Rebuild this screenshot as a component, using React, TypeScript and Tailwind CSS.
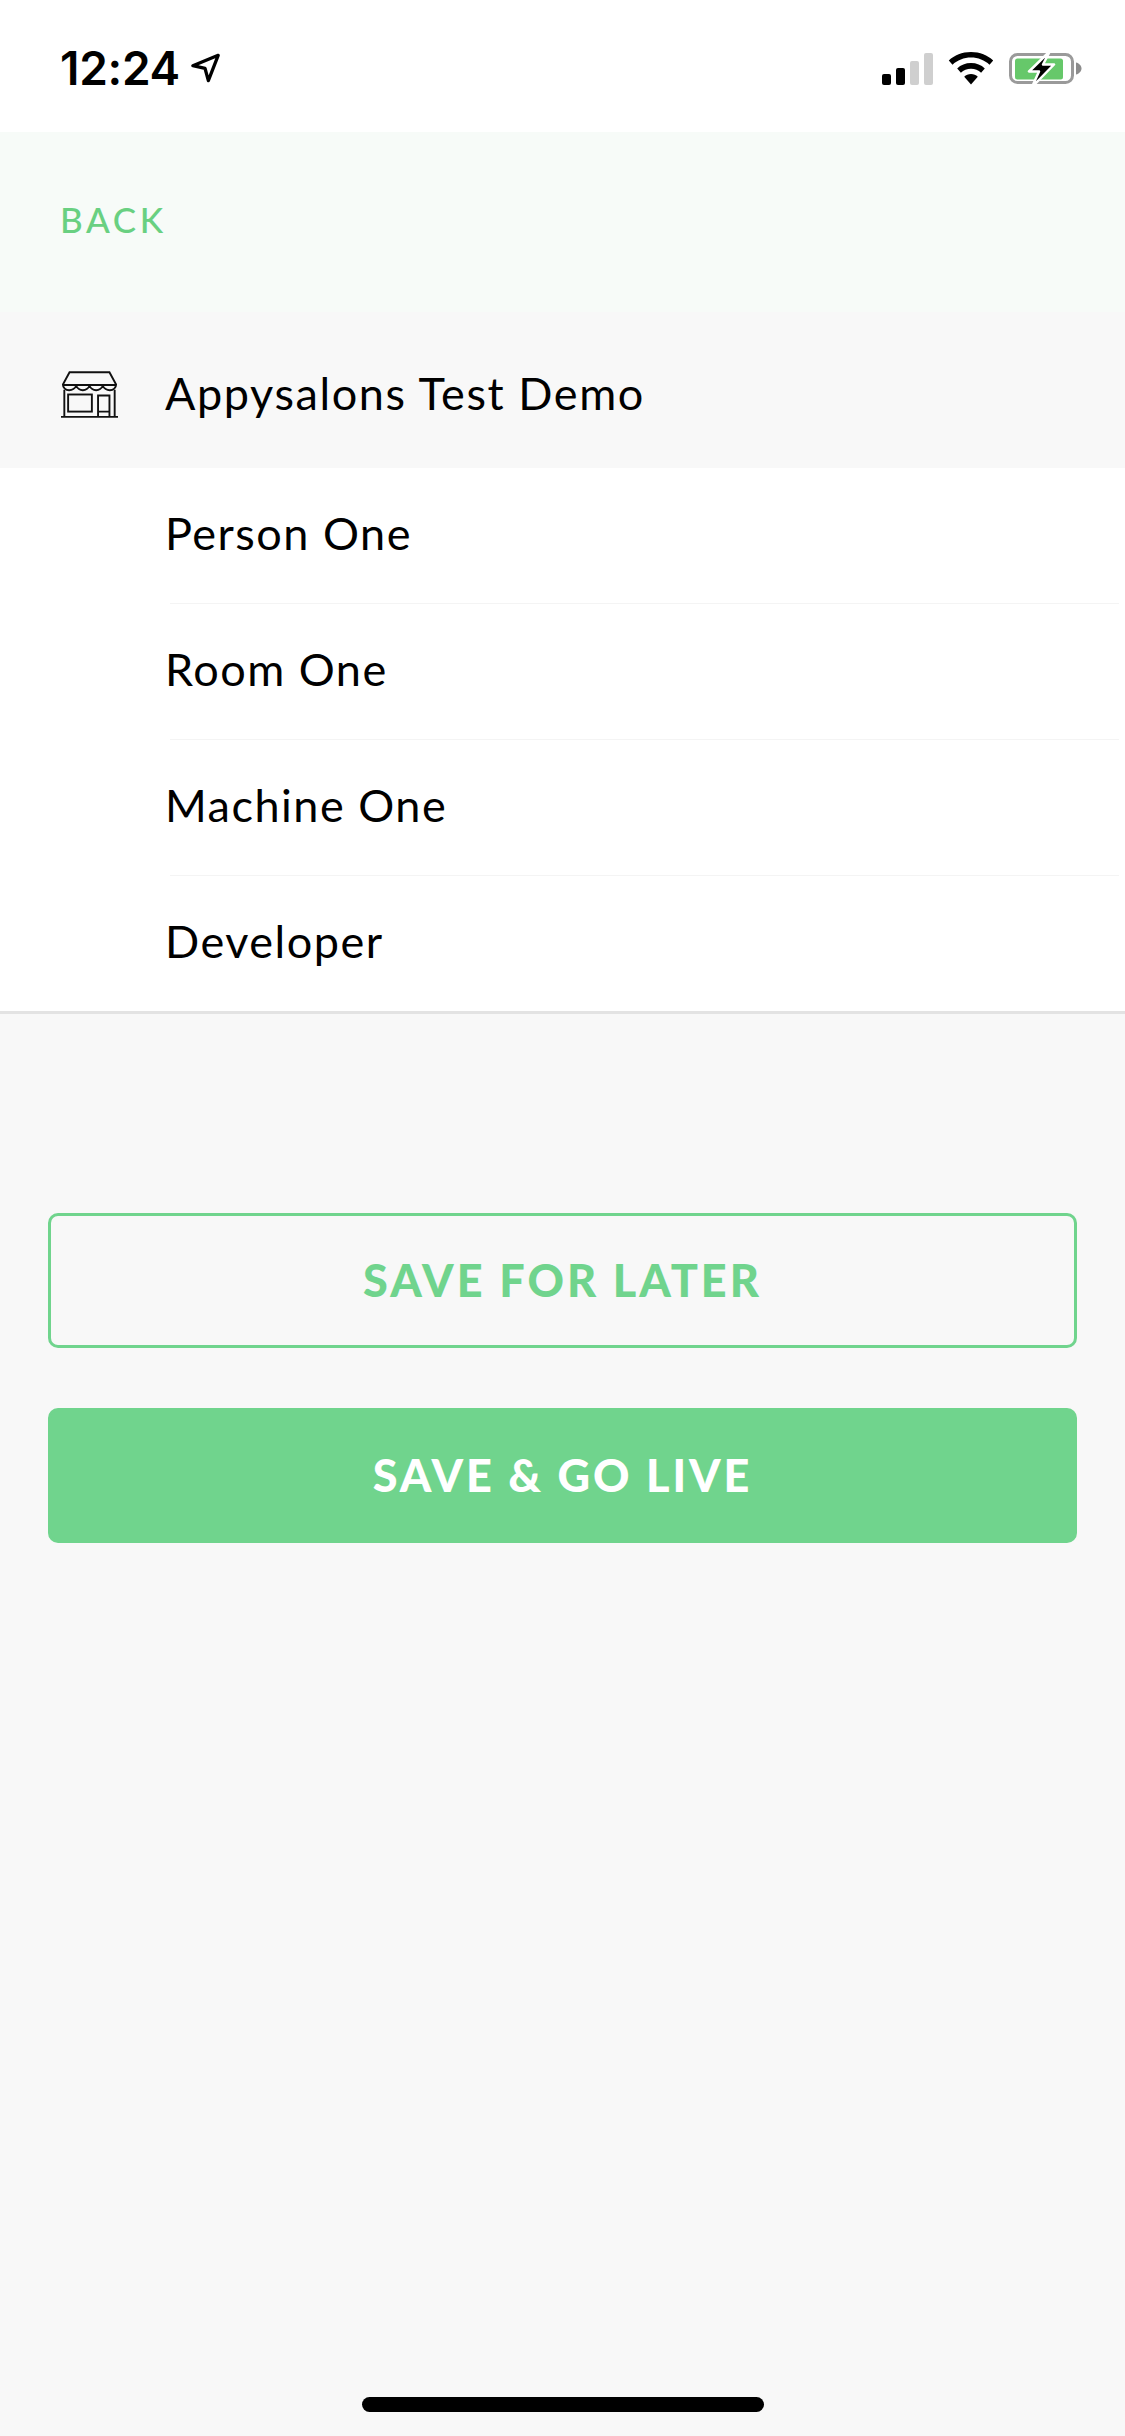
import { Fragment } from "react";

const staff = ["Person One", "Room One", "Machine One", "Developer"];

function StatusBar() {
  return (
    <div className="h-[132px] bg-white flex items-center justify-between pl-[60px] pr-[43px]">
      <div className="flex items-center gap-[11px] pt-[4px]">
        <span className="font-['Inter',sans-serif] font-semibold text-[46px] leading-none text-black tracking-[-0.3px]">
          12:24
        </span>
        <svg width="30" height="30" viewBox="0 0 32 32" fill="none" stroke="#000" strokeWidth="3.5" strokeLinejoin="round">
          <path d="M2 13.5 29 2.5 18.5 29.5 15 16.5Z" />
        </svg>
      </div>
      <div className="flex items-center gap-[15px] pt-[5px]">
        {/* signal */}
        <div className="flex items-end gap-[5px] h-[33px]">
          <div className="w-[9px] h-[11px] rounded-[2px] bg-black" />
          <div className="w-[9px] h-[17px] rounded-[2px] bg-black" />
          <div className="w-[9px] h-[24px] rounded-[2px] bg-[#cfcfcf]" />
          <div className="w-[9px] h-[32px] rounded-[2px] bg-[#cfcfcf]" />
        </div>
        {/* wifi */}
        <svg width="46" height="33" viewBox="0 0 46 33" fill="#000">
          <path d="M23 0C14 0 6.500 3.200 .8 8.500L4.500 12.800C9.400 8.300 15.900 5.600 23 5.600S36.600 8.300 41.500 12.800L45.200 8.500C39.500 3.200 32 0 23 0Z" />
          <path d="M23 11C17.500 11 12.800 13 9.200 16.400L12.900 20.700C15.600 18.200 19.100 16.700 23 16.700S30.400 18.200 33.100 20.700L36.800 16.400C33.200 13 28.500 11 23 11Z" />
          <path d="M23 22C20.300 22 18 23 16.200 24.700L23 32.500 29.800 24.700C28 23 25.700 22 23 22Z" />
        </svg>
        {/* battery */}
        <svg width="73" height="36" viewBox="0 0 73 36">
          <rect x="1.500" y="3.500" width="62" height="28" rx="7" fill="none" stroke="#9a9a9a" strokeWidth="3" />
          <rect x="6" y="7.500" width="48" height="21" rx="2.500" fill="#66c86a" />
          <path d="M67 11.500C70 12.300 72.500 14.500 72.500 17.500S70 22.700 67 23.500Z" fill="#8c8c8c" />
          <path d="M41 0 20 20.500H30L23 36 45 13.500H34Z" fill="#000" stroke="#fff" strokeWidth="2.500" strokeLinejoin="round" />
        </svg>
      </div>
    </div>
  );
}

function StoreIcon() {
  return (
    <svg width="57" height="49" viewBox="0 0 60 50" fill="none" stroke="#111" strokeWidth="2">
      <path d="M9 1.500H51L58 14.500C58 18 55 20.500 51.500 20.500 48 20.500 45.500 19 44 16 42.500 19 40 20.500 37 20.500S31.500 19 30 16C28.500 19 26 20.500 23 20.500S17.500 19 16 16C14.500 19 12 20.500 8.500 20.500 5 20.500 2 18 2 14.500Z" />
      <path d="M2.500 15H57.500" />
      <path d="M3.500 20V48M56.500 20V48M0 48.500H60" />
      <rect x="7.500" y="25" width="25" height="18" />
      <path d="M39 48V26H51V48M39 43H51" />
    </svg>
  );
}

function BottomButton({ label, filled }: { label: string; filled?: boolean }) {
  return (
    <button
      type="button"
      className={
        filled
          ? "h-[135px] w-full rounded-[10px] border-[3px] border-[#70d48d] bg-[#70d48d] text-white font-['Lato',sans-serif] font-black text-[45px] tracking-[2.9px]"
          : "h-[135px] w-full rounded-[10px] border-[3px] border-[#70d48d] text-[#70d48d] font-['Lato',sans-serif] font-black text-[45px] tracking-[3px]"
      }
    >
      {label}
    </button>
  );
}

export default function App() {
  return (
    <div className="relative w-[1125px] h-[2436px] overflow-hidden bg-[#f8f8f8] font-['Lato',sans-serif]">
      <StatusBar />

      <div className="h-[180px] bg-[#f7fbf8] flex items-center pl-[60px] pb-[5px]">
        <span className="text-[35px] font-medium tracking-[3.6px] text-[#69d081]">BACK</span>
      </div>

      {/* salon name */}
      <div className="h-[156px] flex items-center pl-[61px] pt-[8px] gap-[47px]">
        <StoreIcon />
        <span className="text-[45px] tracking-[1.6px] text-black">Appysalons Test Demo</span>
      </div>

      {/* staff list */}
      <div className="bg-white border-b-[3px] border-[#e3e3e3] pl-[165px]">
        {staff.map((name, i) => (
          <Fragment key={name}>
            <div className="h-[135px] flex items-center pb-[3px] text-[45px] tracking-[1.5px] text-black">
              {name}
            </div>
            {i < staff.length - 1 && <div className="h-px bg-[#f4f4f4] ml-[5px] mr-[6px]" />}
          </Fragment>
        ))}
      </div>

      <div className="flex flex-col gap-[60px] px-[48px] pt-[199px]">
        <BottomButton label="SAVE FOR LATER" />
        <BottomButton label="SAVE & GO LIVE" filled />
      </div>

      <div className="absolute bottom-[24px] left-[362px] w-[402px] h-[15px] rounded-full bg-black" />
    </div>
  );
}
